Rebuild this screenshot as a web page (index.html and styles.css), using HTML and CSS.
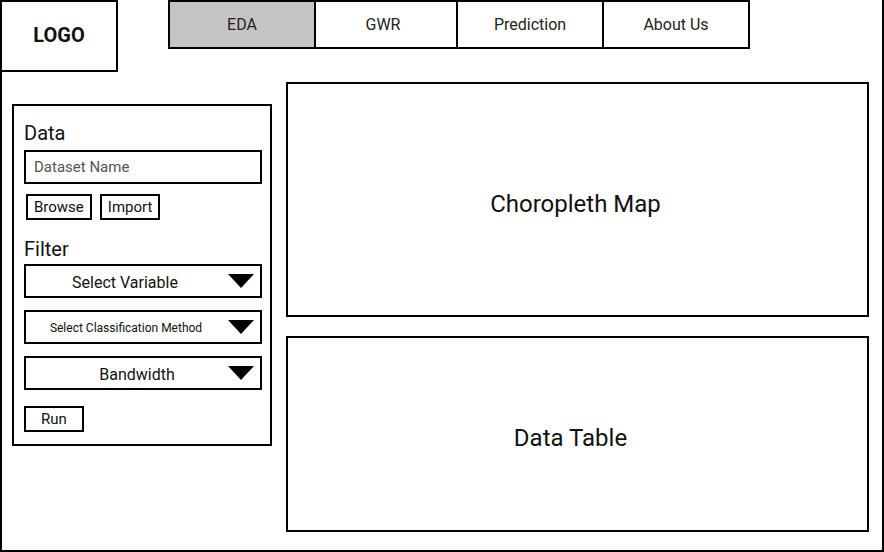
FILE: index.html
```html
<!DOCTYPE html>
<html lang="en">
<head>
  <meta charset="UTF-8">
  <meta name="viewport" content="width=device-width, initial-scale=1.0">
  <title>GWR Explorer - EDA</title>
  <link rel="stylesheet" href="styles.css">
</head>
<body>
  <div class="frame">
    <header class="topbar">
      <div class="logo">LOGO</div>
      <nav class="tabs">
        <a href="#" class="tab active">EDA</a>
        <a href="#" class="tab narrow">GWR</a>
        <a href="#" class="tab">Prediction</a>
        <a href="#" class="tab">About Us</a>
      </nav>
    </header>

    <main class="workspace">
      <aside class="panel">
        <h2>Data</h2>
        <div class="field">Dataset Name</div>
        <div class="btn-row">
          <button class="btn">Browse</button>
          <button class="btn">Import</button>
        </div>

        <h2 class="filter-title">Filter</h2>
        <div class="select">
          <span class="select-label">Select Variable</span>
          <svg class="caret" width="26" height="14" viewBox="0 0 26 14"><polygon points="0,0 26,0 13,14" fill="#000"/></svg>
        </div>
        <div class="select">
          <span class="select-label small">Select Classification Method</span>
          <svg class="caret" width="26" height="14" viewBox="0 0 26 14"><polygon points="0,0 26,0 13,14" fill="#000"/></svg>
        </div>
        <div class="select">
          <span class="select-label wide">Bandwidth</span>
          <svg class="caret" width="26" height="14" viewBox="0 0 26 14"><polygon points="0,0 26,0 13,14" fill="#000"/></svg>
        </div>
        <button class="btn run">Run</button>
      </aside>

      <section class="views">
        <div class="view map">Choropleth Map</div>
        <div class="view table">Data Table</div>
      </section>
    </main>
  </div>
</body>
</html>
```

FILE: styles.css
```css
body {
  margin: 0;
  font-family: Roboto, "Liberation Sans", sans-serif;
  color: #111;
  background: #fff;
}
.frame {
  width: 884px;
  height: 552px;
  box-sizing: border-box;
  border: 2px solid #000;
  border-top: none;
}
.topbar {
  display: flex;
  height: 72px;
  margin-left: -2px;
}
.logo {
  width: 118px;
  height: 72px;
  box-sizing: border-box;
  border: 2px solid #000;
  padding-bottom: 3px;
  display: flex;
  align-items: center;
  justify-content: center;
  font-size: 20px;
  font-weight: 700;
  color: #111;
}
.tabs {
  display: flex;
  margin-left: 50px;
  align-self: flex-start;
}
.tab {
  width: 148px;
  height: 49px;
  box-sizing: border-box;
  border: 2px solid #000;
  display: flex;
  align-items: center;
  justify-content: center;
  font-size: 16px;
  color: #222;
  text-decoration: none;
}
.tab.narrow {
  width: 144px;
  padding-right: 6px;
}
.tab + .tab {
  margin-left: -2px;
}
.tab.active {
  background-color: #c4c4c4;
}
.workspace {
  display: flex;
  gap: 14px;
  padding: 10px 13px 0 10px;
}
.panel {
  width: 260px;
  height: 342px;
  margin-top: 22px;
  box-sizing: border-box;
  border: 2px solid #000;
  padding: 15px 8px 0 10px;
}
h2 {
  margin: 0;
  font-size: 20px;
  font-weight: 400;
  line-height: 24px;
}
.field {
  margin-top: 5px;
  height: 34px;
  box-sizing: border-box;
  border: 2px solid #000;
  padding-left: 8px;
  display: flex;
  align-items: center;
  font-size: 15px;
  color: #555;
}
.btn-row {
  display: flex;
  gap: 8px;
  margin-top: 10px;
  padding-left: 2px;
}
.btn {
  height: 26px;
  box-sizing: border-box;
  border: 2px solid #000;
  background: #fff;
  padding: 0 6px;
  font-family: inherit;
  font-size: 15px;
  color: #111;
}
.filter-title {
  margin-top: 17px;
}
.select {
  display: flex;
  align-items: center;
  height: 34px;
  box-sizing: border-box;
  border: 2px solid #000;
  margin-top: 12px;
  padding-top: 2px;
}
.filter-title + .select {
  margin-top: 3px;
}
.select-label {
  flex: 1;
  text-align: center;
  font-size: 16px;
  color: #111;
  padding-right: 4px;
}
.select-label.small {
  font-size: 12px;
  padding-right: 2px;
}
.select-label.wide {
  padding: 0 0 0 20px;
}
.caret {
  margin-right: 6px;
  margin-bottom: 2px;
}
.run {
  margin-top: 16px;
  width: 60px;
}
.views {
  flex: 1;
  display: flex;
  flex-direction: column;
  gap: 19px;
}
.view {
  box-sizing: border-box;
  border: 2px solid #000;
  display: flex;
  align-items: center;
  justify-content: center;
  padding-top: 9px;
  font-size: 24px;
  color: #111;
}
.map {
  height: 235px;
  padding-right: 4px;
}
.table {
  height: 196px;
  padding-top: 8px;
  padding-right: 14px;
}
```
